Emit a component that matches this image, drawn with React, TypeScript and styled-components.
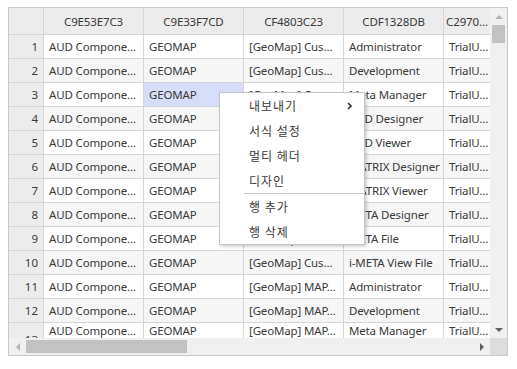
import React from "react";
import styled, { createGlobalStyle } from "styled-components";

const Global = createGlobalStyle`
  html, body { margin: 0; padding: 0; background: #fff; }
  body { padding: 7px 8px; font-family: "Noto Sans", "Noto Sans CJK KR", sans-serif; }
`;

const Frame = styled.div`
  position: relative;
  width: 500px;
  height: 349px;
  box-sizing: border-box;
  border: 1px solid #c9c9c9;
  display: grid;
  grid-template-columns: 1fr 17px;
  grid-template-rows: 1fr 17px;
  font-size: 11.5px;
  color: #3a3a3a;
`;

const Viewport = styled.div`
  overflow: hidden;
`;

const Table = styled.div`
  display: flex;
  flex-direction: column;
  width: max-content;
`;

const Row = styled.div<{ $alt?: boolean; $header?: boolean }>`
  display: flex;
  height: ${(p) => (p.$header ? 27 : 24)}px;
  flex: none;
  background: ${(p) => (p.$header ? "#ececec" : p.$alt ? "#f6f6f6" : "#fff")};
`;

const Cell = styled.div<{ $w: number; $center?: boolean; $sel?: boolean; $low?: boolean }>`
  width: ${(p) => p.$w}px;
  flex: none;
  box-sizing: border-box;
  border-right: 1px solid #d6d6d6;
  border-bottom: 1px solid #d6d6d6;
  padding: ${(p) => (p.$center ? "0 2px" : "0 3px 0 5px")};
  display: flex;
  align-items: ${(p) => (p.$low ? "flex-start" : "center")};
  justify-content: ${(p) => (p.$center ? "center" : "flex-start")};
  white-space: nowrap;
  overflow: hidden;
  letter-spacing: -0.15px;
  background: ${(p) => (p.$sel ? "#d6ddf8" : "transparent")};
`;

const RowHead = styled.div<{ $low?: boolean }>`
  width: 35px;
  flex: none;
  box-sizing: border-box;
  border-right: 1px solid #d6d6d6;
  border-bottom: 1px solid #d6d6d6;
  background: #ececec;
  display: flex;
  align-items: ${(p) => (p.$low ? "flex-end" : "center")};
  justify-content: flex-end;
  padding: 0 5px;
  line-height: ${(p) => (p.$low ? "12px" : "normal")};
`;

const VBar = styled.div`
  background: #f0f0f0;
  display: flex;
  flex-direction: column;
  align-items: center;
`;

const HBar = styled.div`
  background: #f0f0f0;
  display: flex;
  align-items: center;
`;

const Corner = styled.div`
  background: #dcdcdc;
`;

const ArrowBox = styled.div`
  width: 17px;
  height: 17px;
  flex: none;
  display: flex;
  align-items: center;
  justify-content: center;
`;

const VThumb = styled.div`
  width: 13px;
  height: 18px;
  background: #c2c2c2;
`;

const HThumb = styled.div`
  height: 13px;
  width: 161px;
  background: #c2c2c2;
`;

const Spacer = styled.div`
  flex: 1;
`;

const Menu = styled.div`
  position: absolute;
  left: 210px;
  top: 84px;
  width: 146px;
  box-sizing: border-box;
  background: #fff;
  border: 1px solid #c4c4c4;
  box-shadow: 2px 2px 3px rgba(0, 0, 0, 0.18);
  font-family: "Noto Sans CJK KR", sans-serif;
  font-size: 12px;
  color: #3a3a3a;
`;

const MenuItem = styled.div`
  height: 25px;
  display: flex;
  align-items: center;
  padding: 0 12px 0 29px;
  letter-spacing: 1px;
`;

const MenuLabel = styled.span`
  flex: 1;
`;

const Sep = styled.div`
  height: 1px;
  margin-left: 24px;
  background: #c8c8c8;
`;

const triangle = (dir: "up" | "down" | "left" | "right", color: string) => {
  const pts = {
    up: "0,4 4,0 8,4",
    down: "0,0 8,0 4,4",
    left: "4,0 4,8 0,4",
    right: "0,0 0,8 4,4",
  }[dir];
  const horiz = dir === "left" || dir === "right";
  return (
    <svg width={horiz ? 4 : 8} height={horiz ? 8 : 4} viewBox={horiz ? "0 0 4 8" : "0 0 8 4"}>
      <polygon points={pts} fill={color} />
    </svg>
  );
};

const roles = [
  "Administrator",
  "Development",
  "Meta Manager",
  "AUD Designer",
  "AUD Viewer",
  "MATRIX Designer",
  "MATRIX Viewer",
  "META Designer",
  "META File",
  "i-META View File",
  "Administrator",
  "Development",
  "Meta Manager",
];

const headers = ["C9E53E7C3", "C9E33F7CD", "CF4803C23", "CDF1328DB", "C2970…"];
const widths = [100, 100, 100, 100, 47];

export default function App() {
  return (
    <>
      <Global />
      <Frame>
        <Viewport>
          <Table>
            <Row $header>
              <RowHead />
              {headers.map((h, i) => (
                <Cell key={i} $w={widths[i]} $center>
                  {h}
                </Cell>
              ))}
            </Row>
            {roles.map((r, i) => {
              const n = i + 1;
              const low = n === 13;
              return (
                <Row key={n} $alt={n % 2 === 0}>
                  <RowHead $low={low}>{n}</RowHead>
                  <Cell $w={100} $low={low}>AUD Compone…</Cell>
                  <Cell $w={100} $low={low} $sel={n === 3}>GEOMAP</Cell>
                  <Cell $w={100} $low={low}>{n <= 10 ? "[GeoMap] Cus…" : "[GeoMap] MAP…"}</Cell>
                  <Cell $w={100} $low={low}>{r}</Cell>
                  <Cell $w={47} $low={low}>TrialU…</Cell>
                </Row>
              );
            })}
          </Table>
        </Viewport>
        <VBar>
          <ArrowBox>{triangle("up", "#b4b4b4")}</ArrowBox>
          <VThumb />
          <Spacer />
          <ArrowBox>{triangle("down", "#606060")}</ArrowBox>
        </VBar>
        <HBar>
          <ArrowBox>{triangle("left", "#b4b4b4")}</ArrowBox>
          <HThumb />
          <Spacer />
          <ArrowBox>{triangle("right", "#606060")}</ArrowBox>
        </HBar>
        <Corner />
        <Menu>
          <MenuItem>
            <MenuLabel>내보내기</MenuLabel>
            <svg width="5" height="8" viewBox="0 0 5 8">
              <polyline points="1,1 4,4 1,7" fill="none" stroke="#333" strokeWidth="1.6" />
            </svg>
          </MenuItem>
          <MenuItem>서식 설정</MenuItem>
          <MenuItem>멀티 헤더</MenuItem>
          <MenuItem>디자인</MenuItem>
          <Sep />
          <MenuItem>행 추가</MenuItem>
          <MenuItem>행 삭제</MenuItem>
        </Menu>
      </Frame>
    </>
  );
}
